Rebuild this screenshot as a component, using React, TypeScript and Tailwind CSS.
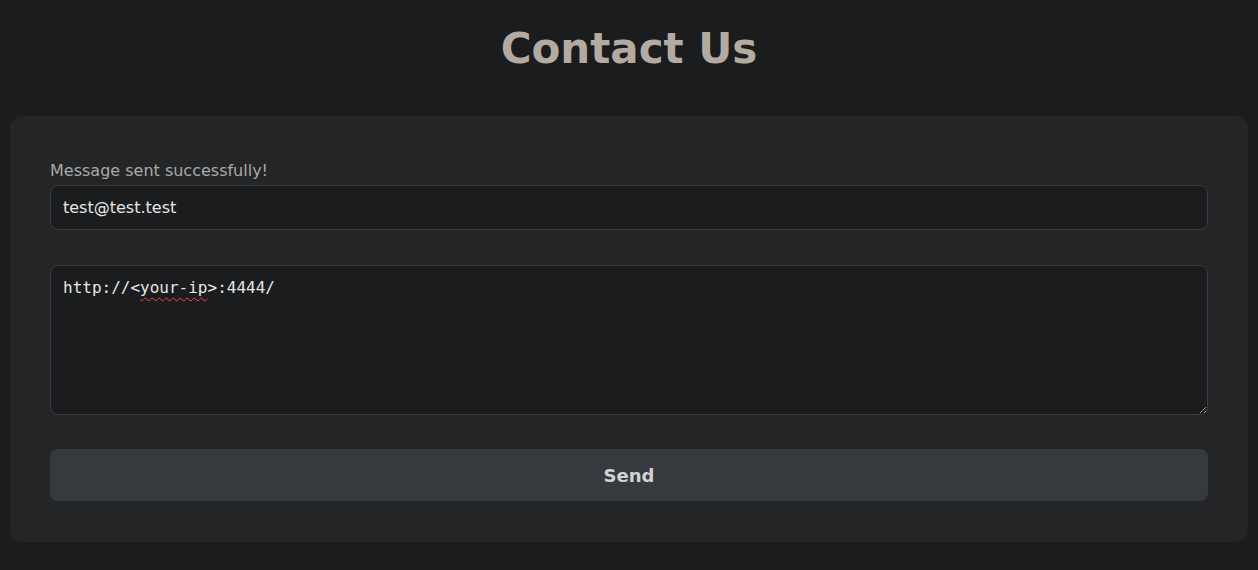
import React from "react";

const App = () => {
  return (
    <div
      className="min-h-[570px] bg-[#1b1c1e] px-[10px] pb-[28px]"
      style={{ fontFamily: '"DejaVu Sans", sans-serif' }}
    >
      {/* Heading */}
      <h1 className="pt-[20px] text-center text-[42px] font-bold leading-[58px] text-[#b3aba1]">
        Contact Us
      </h1>

      {/* Form card */}
      <div className="mt-[38px] rounded-xl bg-[#242527] px-[40px] pt-[45px] pb-[41px]">
        <p className="text-[16px] leading-[20px] text-[#a9a9a9]">
          Message sent successfully!
        </p>
        <div className="mt-[4px] flex h-[45px] items-center rounded-lg border border-[#3a3b3e] bg-[#1b1c1e] px-[12px] text-[16px] text-[#e6e6e6]">
          test@test.test
        </div>

        <div
          className="mt-[35px] h-[150px] resize-y overflow-auto rounded-lg border border-[#3a3b3e] bg-[#1b1c1e] px-[12px] py-[11px] text-[16px] leading-[22px] text-[#e6e6e6]"
          style={{ fontFamily: '"DejaVu Sans Mono", monospace' }}
        >
          http://&lt;
          <span className="underline decoration-wavy decoration-[#e5484d] decoration-1 underline-offset-[4px]">
            your-ip
          </span>
          &gt;:4444/
        </div>

        <button className="mt-[34px] flex h-[52px] w-full items-center justify-center rounded-lg bg-[#363a3e] text-[18px] font-bold text-[#d2d2d2]">
          Send
        </button>
      </div>
    </div>
  );
};

export default App;
